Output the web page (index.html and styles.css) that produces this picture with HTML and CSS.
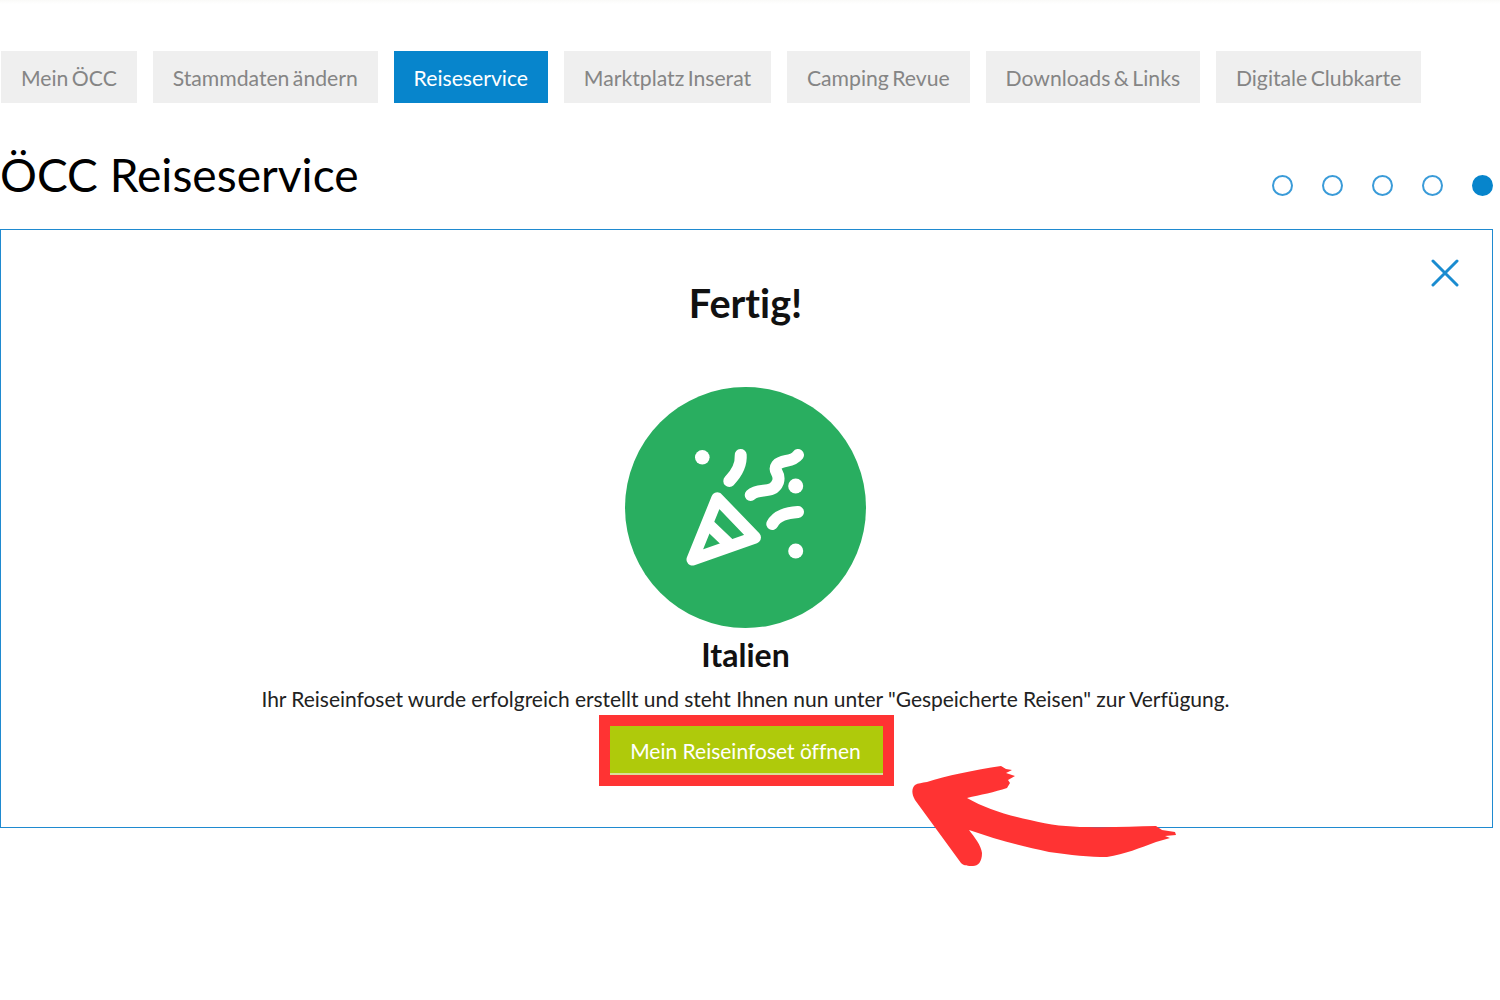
FILE: index.html
```html
<!DOCTYPE html>
<html lang="de">
<head>
<meta charset="utf-8">
<title>ÖCC Reiseservice</title>
<link rel="stylesheet" href="styles.css">
</head>
<body>
<div class="page">
  <div class="strip"></div>
  <nav class="tabs">
    <a class="tab">Mein ÖCC</a>
    <a class="tab">Stammdaten ändern</a>
    <a class="tab tab-active">Reiseservice</a>
    <a class="tab">Marktplatz Inserat</a>
    <a class="tab">Camping Revue</a>
    <a class="tab">Downloads &amp; Links</a>
    <a class="tab">Digitale Clubkarte</a>
  </nav>
  <div class="head">
    <h1 class="title">ÖCC Reiseservice</h1>
    <div class="steps">
      <span class="step"></span>
      <span class="step"></span>
      <span class="step"></span>
      <span class="step"></span>
      <span class="step step-on"></span>
    </div>
  </div>
  <section class="card">
    <svg class="close" viewBox="0 0 28 28" width="28" height="28" aria-label="Schließen">
      <path d="M2 2 26 26M26 2 2 26"/>
    </svg>
    <h2 class="done">Fertig!</h2>
    <svg class="badge" viewBox="0 0 241 241" width="241" height="241">
      <circle class="badge-bg" cx="120.5" cy="120.5" r="120.5"/>
      <g class="badge-dots">
        <circle cx="77.3" cy="70.3" r="7.3"/>
        <circle cx="170.7" cy="99" r="7.5"/>
        <circle cx="170.7" cy="164" r="7.5"/>
      </g>
      <g class="badge-lines">
        <path d="M115.7 68C116.5 79 111 87 104.3 94"/>
        <path d="M125.7 108C134 100 148 108 153 95C156 85 147 85 152 78C157 72 167 76 173 68"/>
        <path d="M147.3 137C152 128 162 126 173 125"/>
        <path d="M92.3 111.3 130 150.5 67.5 172.5Z"/>
        <path d="M83 137 105 158"/>
      </g>
    </svg>
    <h3 class="place">Italien</h3>
    <p class="msg">Ihr Reiseinfoset wurde erfolgreich erstellt und steht Ihnen nun unter "Gespeicherte Reisen" zur Verfügung.</p>
    <div class="mark">
      <a class="open">Mein Reiseinfoset öffnen</a>
    </div>
  </section>
  <svg class="arrow" viewBox="900 755 290 120" width="290" height="120">
    <path d="M927 782C945 776 975 770 1001 766L1006 769 1012 770 1006 773 1015 776 1008 780 1010 783 1007 788C995 792 980 795 967 798C985 808 1005 815 1030 820C1050 825 1068 827 1087 827C1110 828 1135 826 1156 826L1162 830 1175 832 1176 835 1165 836 1170 838 1156 842C1140 848 1125 854 1107 857C1090 857 1070 855 1049 852C1020 846 995 839 969 830C975 838 981 845 982 853C982 862 978 866 973 866C968 866 964 866 961 863L915 800C911 793 912 788 915 785C918 783 922 783 927 782Z"/>
  </svg>
</div>
</body>
</html>
```

FILE: styles.css
```css
* {
  box-sizing: border-box;
}

html,
body {
  margin: 0;
  background: #fff;
}

body {
  font-family: Lato, "Liberation Sans", sans-serif;
  color: #111;
  font-variant-ligatures: none;
}

.page {
  position: relative;
  width: 1500px;
  height: 1000px;
  overflow: hidden;
}

.strip {
  height: 51px;
  background: linear-gradient(#fafaf8, #fff 4px);
}

.tabs {
  display: flex;
  gap: 15.8px;
  padding-left: 1px;
}

.tab {
  height: 52px;
  padding: 1px 20px 0;
  display: flex;
  align-items: center;
  background: #efefef;
  color: #858585;
  font-size: 21.2px;
  word-spacing: -2px;
  white-space: nowrap;
}

.tab-active {
  background: #0785cc;
  color: #fff;
}

.head {
  width: 1493px;
  height: 126px;
  display: flex;
  justify-content: space-between;
  align-items: flex-start;
}

.title {
  margin: 45px 0 0;
  font-size: 46.1px;
  line-height: 52px;
  font-weight: 400;
  color: #000;
}

.steps {
  display: flex;
  gap: 29px;
  margin-top: 72px;
}

.step {
  width: 21px;
  height: 21px;
  border: 2px solid #3a9bd8;
  border-radius: 50%;
}

.step-on {
  background: #0785cc;
  border-color: #0785cc;
}

.card {
  position: relative;
  width: 1493px;
  height: 599px;
  padding-right: 2px;
  border: 1px solid #1f8ad0;
  display: flex;
  flex-direction: column;
  align-items: center;
}

.close {
  position: absolute;
  top: 29px;
  right: 33px;
}

.close path {
  fill: none;
  stroke: #1a8cd0;
  stroke-width: 3;
  stroke-linecap: round;
}

.done {
  margin: 51px 0 0;
  font-size: 39.6px;
  line-height: 44px;
  font-weight: 700;
  color: #111;
}

.badge {
  display: block;
  margin-top: 62px;
}

.badge-bg {
  fill: #29ae60;
}

.badge-dots circle {
  fill: #fff;
}

.badge-lines path {
  fill: none;
  stroke: #fff;
  stroke-width: 12;
  stroke-linecap: round;
  stroke-linejoin: round;
}

.place {
  margin: 6px 0 0;
  font-size: 32px;
  line-height: 42px;
  font-weight: 700;
  color: #111;
}

.msg {
  margin: 8px 0 0;
  font-size: 21px;
  line-height: 30px;
  letter-spacing: -0.03px;
  color: #222;
  white-space: nowrap;
}

.mark {
  margin: 1px 0 0 2px;
  border: 11px solid #ff3333;
  background: #fff;
}

.open {
  display: block;
  width: 273px;
  height: 49px;
  line-height: 49px;
  padding-right: 2px;
  text-align: center;
  background: #afca0b;
  color: #fff;
  font-size: 21px;
  white-space: nowrap;
  border-bottom: 2px solid #dcdc9a;
}

.arrow {
  position: absolute;
  left: 900px;
  top: 755px;
}

.arrow path {
  fill: #ff3333;
}
```
